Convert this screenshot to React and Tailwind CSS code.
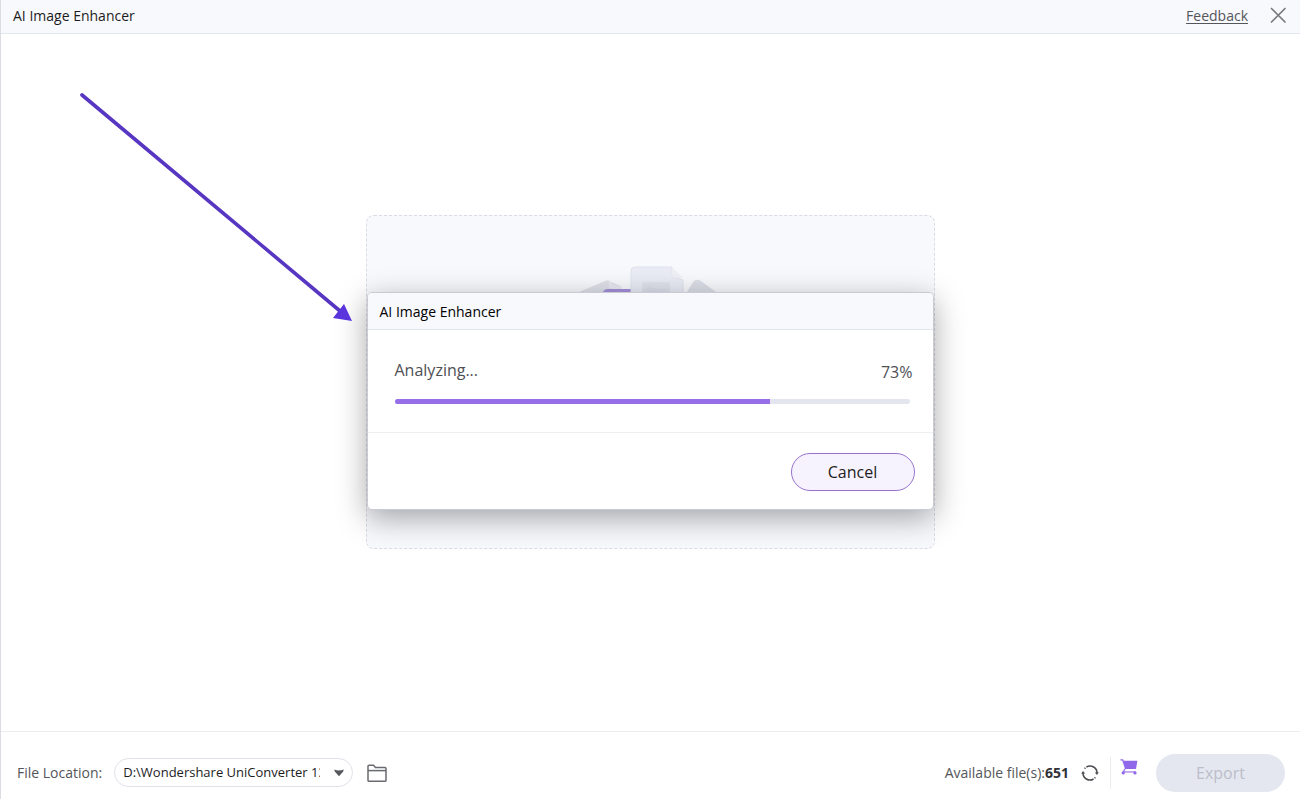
import React, { useState } from 'react';

const PlaceholderArt = () => (
  <svg className="w-36 h-14" viewBox="0 0 144 56" fill="none" aria-hidden="true">
    <path d="M1 26 L27 15 Q30 13 33 16 L43 20 L46 40 L10 40 Z" fill="#dfe1ea" />
    <path d="M31 14 L34 19 L43 20 L42 25 L31 22 Z" fill="#e8eaf2" />
    <path d="M25 26 Q26 23 30 23 H53 V40 H25 Z" fill="#a58fdc" />
    <path d="M109 26 L115 16 Q118 12 123 15 L138 26 V40 H109 Z" fill="#dcdee7" />
    <path d="M53 5 Q53 1 57 1 H94 V8 Q94 12 98 12 L105 14 V40 H53 Z" fill="#e9ecf5" stroke="#e0e3ec" />
    <path d="M94 1 L105 12 H98 Q94 12 94 8 Z" fill="#eef0f6" />
    <path d="M64 16 H92 V40 H64 Z" fill="#dfe2ec" />
    <path d="M64 26 L72 20 L80 24 L86 22 L92 26 V40 H64 Z" fill="#dbdee9" />
  </svg>
);

const PointerArrow = () => (
  <svg
    className="absolute left-[79px] top-[92px] w-[274px] h-[232px] pointer-events-none"
    viewBox="0 0 274 232"
    aria-hidden="true"
  >
    <path d="M2 3 L260 219" stroke="#5736c2" strokeWidth="3.6" strokeLinecap="round" />
    <path d="M272 229 L253 226 L264 212 Z" fill="#5a34dc" />
  </svg>
);

const Header = () => (
  <header className="flex items-center justify-between h-[34px] px-3 bg-[#f8f9fd] border-b border-[#e4e7ee]">
    <h1 className="pb-0.5 text-sm text-[#1c1c1c]">AI Image Enhancer</h1>
    <div className="flex items-center gap-5">
      <a href="#feedback" className="pb-0.5 text-sm text-[#54565a] underline underline-offset-2">
        Feedback
      </a>
      <button type="button" aria-label="Close" className="pb-1">
        <svg className="w-5 h-5" viewBox="0 0 20 20" stroke="#77797f" strokeWidth="1.7" strokeLinecap="round">
          <path d="M3.5 3.5 L17 17 M17 3.5 L3.5 17" />
        </svg>
      </button>
    </div>
  </header>
);

const ProgressDialog = ({ progress }) => (
  <section
    role="dialog"
    aria-labelledby="dialog-title"
    className="absolute left-0 right-0 top-[76px] bg-white border border-[#c9cad3] rounded-[5px] shadow-[0_8px_30px_rgba(0,0,0,0.35)] overflow-hidden"
  >
    <h2
      id="dialog-title"
      className="flex items-center h-[37px] pt-0.5 px-3 text-sm text-black bg-[#f8f9fd] border-b border-[#e2e5ec]"
    >
      AI Image Enhancer
    </h2>
    <div className="h-[103px] pl-[27px] pr-5 pt-7 border-b border-[#eeeff3]">
      <div className="flex items-start justify-between h-7">
        <p id="dialog-status" className="text-base leading-6 text-[#4e5054]">Analyzing...</p>
        <span className="pt-0.5 text-base leading-6 text-[#4e5054]">{progress}%</span>
      </div>
      <div
        role="progressbar"
        aria-labelledby="dialog-status"
        aria-valuenow={progress}
        aria-valuemin={0}
        aria-valuemax={100}
        className="mt-[13px] mr-[3px] h-[5px] rounded-full bg-[#e3e6ef] overflow-hidden"
      >
        <div className="h-full bg-[#966fe8]" style={{ width: `${progress}%` }} />
      </div>
    </div>
    <div className="flex justify-end pt-5 pb-[18px] pr-[18px]">
      <button
        type="button"
        className="w-[124px] h-[38px] rounded-full border border-[#9a72cc] bg-[#f7f3fe] text-base text-[#1c1c1c]"
      >
        Cancel
      </button>
    </div>
  </section>
);

const Footer = () => {
  const [location, setLocation] = useState('converter');

  return (
    <footer className="flex items-center justify-between h-[68px] pt-[14px] pl-4 pr-[15px] border-t border-[#ededf0]">
      <div className="flex items-center">
        <label htmlFor="file-location" className="text-sm text-[#54565a]">
          File Location:
        </label>
        <div className="relative ml-3 w-[239px] h-[29px] px-2 rounded-full border border-[#e0e2e8]">
          <select
            id="file-location"
            value={location}
            onChange={(e) => setLocation(e.target.value)}
            className="block w-[197px] h-full appearance-none overflow-hidden text-clip bg-transparent text-[13px] text-[#1c1c1c] outline-none"
          >
            <option value="converter">D:\Wondershare UniConverter 13</option>
          </select>
          <svg
            className="absolute right-2 top-[10px] w-[10px] h-2 pointer-events-none"
            viewBox="0 0 10 8"
            fill="#55575c"
            aria-hidden="true"
          >
            <path d="M0.3 0.6 Q5 2.4 9.7 0.6 L9.2 2.6 L5 7.2 L0.8 2.6 Z" />
          </svg>
        </div>
        <button type="button" aria-label="Open folder" className="ml-[14px]">
          <svg className="w-5 h-5" viewBox="0 0 20 20" fill="none" stroke="#696b70" strokeWidth="1.5" strokeLinejoin="round">
            <path d="M1 17.4 V3.2 Q1 2.2 2 2.2 H6.5 L8.5 4.6 H18 Q19 4.6 19 5.6 V17.4 Q19 18.2 18 18.2 H2 Q1 18.2 1 17.4 Z" />
            <path d="M1 7.6 H19" />
          </svg>
        </button>
      </div>

      <div className="flex items-center">
        <p className="text-sm text-[#54565a]">
          Available file(s):<b className="text-[#303238]">651</b>
        </p>
        <button type="button" aria-label="Refresh" className="ml-3">
          <svg className="w-[18px] h-[18px]" viewBox="0 0 18 18" fill="none" stroke="#4c4e52" strokeWidth="1.5">
            <path d="M5.4 3 A7 7 0 0 1 16 9.4" />
            <path d="M12.6 15 A7 7 0 0 1 2 8.6" />
            <path d="M3.6 4.6 L4.4 3.8" />
            <path d="M14.4 13.4 L13.6 14.2" />
            <path d="M13.8 8.4 L17.8 8.2 L16 11 Z" fill="#4c4e52" stroke="none" />
            <path d="M4.2 9.6 L0.2 9.8 L2 7 Z" fill="#4c4e52" stroke="none" />
          </svg>
        </button>
        <div className="ml-[11px] mr-[9px] w-px h-8 bg-[#ececf0]" />
        <button type="button" aria-label="Buy more" className="pb-3">
          <svg className="w-[18px] h-[18px]" viewBox="0 0 18 18" fill="#9268ea" aria-hidden="true">
            <path d="M0.4 1.2 H3 L3.8 2.8 H17.4 L16 11 H5 L2.2 2.4 H0.4 Z" />
            <path d="M2.6 13.4 H15.6 V14.5 H2.6 Z" />
            <path d="M4.6 10.4 L5.6 11 L4 13.8 L2.8 13.4 Z" />
            <circle cx="3.2" cy="14.9" r="1.6" />
            <circle cx="15" cy="14.9" r="1.6" />
          </svg>
        </button>
        <button
          type="button"
          disabled
          className="ml-[18px] w-[129px] h-[38px] rounded-full bg-[#e4e7f0] text-base text-[#bbbec9]"
        >
          Export
        </button>
      </div>
    </footer>
  );
};

const App = () => {
  const [progress] = useState(73);

  return (
    <div className="relative flex flex-col min-h-screen bg-white border-l border-[#dcdde2] font-['Open_Sans','Noto_Sans',sans-serif]">
      <Header />
      <main className="grow flex items-center justify-center pb-0.5 pr-px">
        <div className="relative w-[569px] h-[334px] rounded-lg border border-dashed border-[#d9dbe5] bg-[#f8f9fd]">
          <div className="flex justify-center pt-[50px]">
            <PlaceholderArt />
          </div>
          <ProgressDialog progress={progress} />
        </div>
      </main>
      <Footer />
      <PointerArrow />
    </div>
  );
};

export default App;
